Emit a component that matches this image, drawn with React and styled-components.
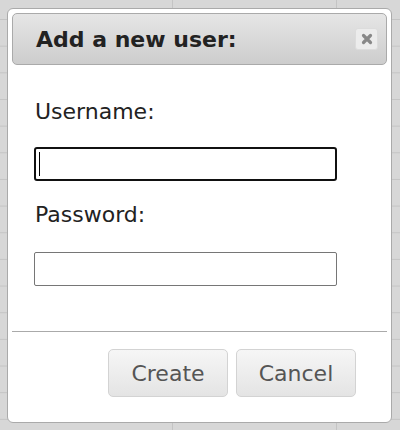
import React from 'react'
import styled, { createGlobalStyle } from 'styled-components'

const GlobalStyle = createGlobalStyle`
  html, body {
    margin: 0;
    height: 100%;
  }
  body {
    font-family: "DejaVu Sans", Verdana, sans-serif;
    background-color: #d7d7d7;
    background-image:
      linear-gradient(#c4c4c4 1px, transparent 1px),
      linear-gradient(90deg, #c4c4c4 1px, transparent 1px);
    background-size: 82px 26.667px;
    background-position: 8px 19px;
  }
`;

const Page = styled.div`
  padding: 8px 0 0 7px;
  box-sizing: border-box;
  height: 430px;
`;

const Dialog = styled.div`
  width: 385px;
  height: 415px;
  box-sizing: border-box;
  background: #ffffff;
  border: 1px solid #aaaaaa;
  border-radius: 6px;
  padding: 4px;
  display: flex;
  flex-direction: column;
`;

const TitleBar = styled.div`
  height: 52px;
  box-sizing: border-box;
  display: flex;
  align-items: center;
  justify-content: space-between;
  padding: 0 8px 0 23px;
  border: 1px solid #aaaaaa;
  border-radius: 5px;
  background: linear-gradient(#e6e6e6, #cdcdcd);
`;

const Title = styled.span`
  font-size: 22px;
  font-weight: bold;
  color: #222222;
`;

const CloseButton = styled.button`
  width: 23px;
  height: 22px;
  padding: 0;
  display: flex;
  align-items: center;
  justify-content: center;
  background: #ececec;
  border: 1px solid #dcdcdc;
  border-radius: 3px;
`;

const Content = styled.div`
  flex: 1;
  padding: 0 22px;
`;

const Label = styled.div`
  font-size: 22px;
  line-height: 26px;
  color: #222222;
  margin-top: ${p => p.$top}px;
  padding-left: 1px;
`;

const InputWrap = styled.div`
  position: relative;
  margin-top: ${p => p.$top}px;
`;

const TextInput = styled.input`
  display: block;
  width: 303px;
  height: 34px;
  box-sizing: border-box;
  margin: 0;
  font-family: inherit;
  font-size: 18px;
  outline: none;
  border: ${p => (p.$focused ? '2px solid #111111' : '1px solid #767676')};
  border-radius: ${p => (p.$focused ? '3px' : '2px')};
  background: #ffffff;
`;

const Caret = styled.span`
  position: absolute;
  left: 5px;
  top: 5px;
  width: 1px;
  height: 24px;
  background: #000000;
`;

const Footer = styled.div`
  border-top: 1px solid #aaaaaa;
  height: 87px;
  box-sizing: border-box;
  display: flex;
  justify-content: flex-end;
  gap: 8px;
  padding: 17px 31px 0 0;
`;

const Button = styled.button`
  width: 120px;
  height: 48px;
  box-sizing: border-box;
  font-family: inherit;
  font-size: 22px;
  color: #555555;
  background: linear-gradient(#f6f6f6, #e4e4e4);
  border: 1px solid #d3d3d3;
  border-radius: 5px;
`;

function CloseIcon() {
  return (
    <svg width="12" height="12" viewBox="0 0 12 12">
      <path d="M2.5 2.5 L9.5 9.5 M9.5 2.5 L2.5 9.5" stroke="#888888" strokeWidth="3.2" strokeLinecap="round" />
    </svg>
  )
}

function App() {
  return (
    <Page>
      <GlobalStyle />
      <Dialog>
        <TitleBar>
          <Title>Add a new user:</Title>
          <CloseButton aria-label="close"><CloseIcon /></CloseButton>
        </TitleBar>
        <Content>
          <Label $top={34}>Username:</Label>
          <InputWrap $top={22}>
            <TextInput type="text" $focused />
            <Caret />
          </InputWrap>
          <Label $top={21}>Password:</Label>
          <InputWrap $top={24}>
            <TextInput type="password" />
          </InputWrap>
        </Content>
        <Footer>
          <Button>Create</Button>
          <Button>Cancel</Button>
        </Footer>
      </Dialog>
    </Page>
  )
}

export default App
